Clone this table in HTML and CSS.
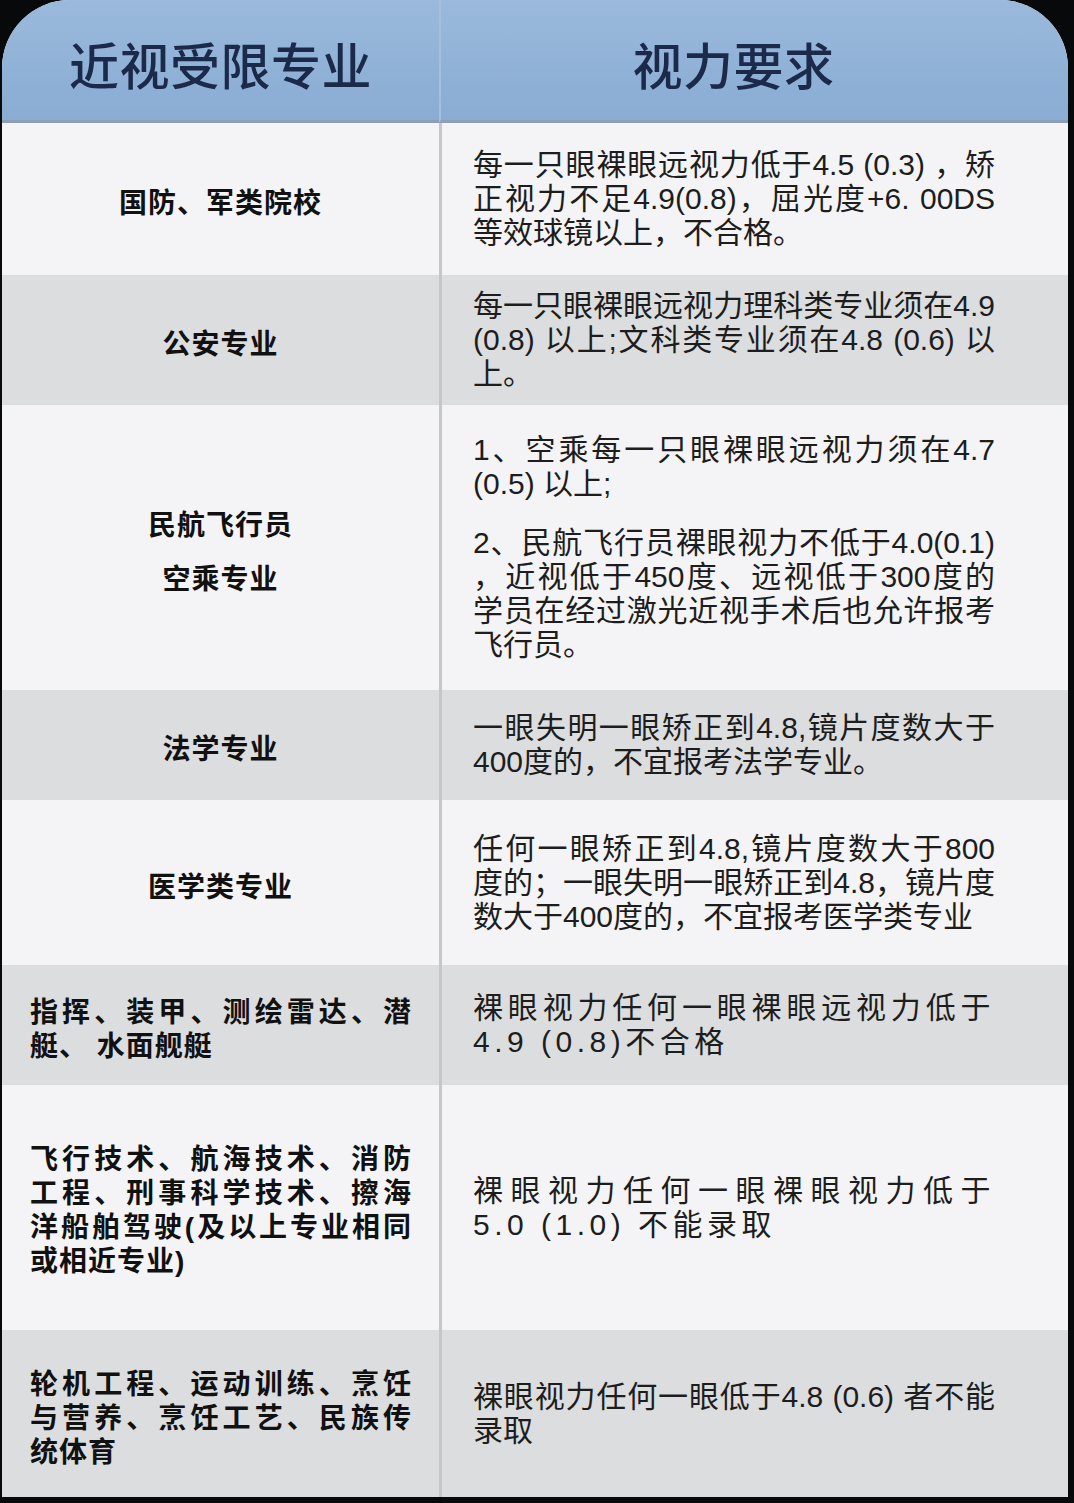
FILE: index.html
```html
<!DOCTYPE html>
<html lang="zh-CN">
<head>
<meta charset="utf-8">
<title>近视受限专业</title>
<link rel="stylesheet" href="styles.css">
</head>
<body>
<div class="card">
  <div class="table">
    <div class="cell head head-left">近视受限专业</div>
    <div class="cell head head-right">视力要求</div>

    <div class="cell major light">国防、军类院校</div>
    <div class="cell req light"><p><span class="ln">每一只眼裸眼远视力低于4.5 (0.3) ，矫</span><span class="ln">正视力不足4.9(0.8)，屈光度+6. 00DS</span><span class="ln">等效球镜以上，不合格。</span></p></div>

    <div class="cell major dark">公安专业</div>
    <div class="cell req dark"><p><span class="ln">每一只眼裸眼远视力理科类专业须在4.9</span><span class="ln">(0.8) 以上;文科类专业须在4.8 (0.6) 以</span><span class="ln">上。</span></p></div>

    <div class="cell major light"><div class="stack"><span>民航飞行员</span><span>空乘专业</span></div></div>
    <div class="cell req light"><div class="paras"><p><span class="ln">1、空乘每一只眼裸眼远视力须在4.7</span><span class="ln">(0.5) 以上;</span></p><p><span class="ln">2、民航飞行员裸眼视力不低于4.0(0.1)</span><span class="ln">，近视低于450度、远视低于300度的</span><span class="ln">学员在经过激光近视手术后也允许报考</span><span class="ln">飞行员。</span></p></div></div>

    <div class="cell major dark">法学专业</div>
    <div class="cell req dark"><p><span class="ln">一眼失明一眼矫正到4.8,镜片度数大于</span><span class="ln">400度的，不宜报考法学专业。</span></p></div>

    <div class="cell major light">医学类专业</div>
    <div class="cell req light"><p><span class="ln">任何一眼矫正到4.8,镜片度数大于800</span><span class="ln">度的；一眼失明一眼矫正到4.8，镜片度</span><span class="ln">数大于400度的，不宜报考医学类专业</span></p></div>

    <div class="cell major long dark"><p><span class="ln">指挥、装甲、测绘雷达、潜</span><span class="ln">艇、 水面舰艇</span></p></div>
    <div class="cell req dark"><p class="spaced"><span class="ln">裸眼视力任何一眼裸眼远视力低于</span><span class="ln">4.9 (0.8)不合格</span></p></div>

    <div class="cell major long tall light"><p><span class="ln">飞行技术、航海技术、消防</span><span class="ln">工程、刑事科学技术、擦海</span><span class="ln">洋船舶驾驶(及以上专业相同</span><span class="ln">或相近专业)</span></p></div>
    <div class="cell req light"><p class="spaced"><span class="ln">裸眼视力任何一眼裸眼视力低于</span><span class="ln">5.0 (1.0) 不能录取</span></p></div>

    <div class="cell major long dark"><p><span class="ln">轮机工程、运动训练、烹饪</span><span class="ln">与营养、烹饪工艺、民族传</span><span class="ln">统体育</span></p></div>
    <div class="cell req dark"><p><span class="ln">裸眼视力任何一眼低于4.8 (0.6) 者不能</span><span class="ln">录取</span></p></div>
  </div>
</div>
</body>
</html>
```

FILE: styles.css
```css
html, body {
  margin: 0;
  padding: 0;
  background: #08090b;
}

body {
  width: 1074px;
  height: 1503px;
  overflow: hidden;
}

.card {
  margin-left: 2px;
  width: 1066px;
  height: 1497px;
  border-radius: 68px 68px 0 0;
  overflow: hidden;
  background: #f4f4f6;
}

.table {
  display: grid;
  grid-template-columns: 437px 629px;
  grid-template-rows: 123px 152px 130px 285px 110px 165px 120px 245px 167px;
}

.cell {
  display: flex;
  align-items: center;
  box-sizing: border-box;
}

.cell p {
  margin: 0;
}

.light {
  background: #f4f4f6;
}

.dark {
  background: #dcdddf;
}

.head {
  background: linear-gradient(#9ab9dc, #8aacd3);
  border-bottom: 3px solid #8b9fb6;
  justify-content: center;
  font-family: "Noto Sans CJK SC", sans-serif;
  font-weight: 500;
  font-size: 50px;
  color: #1b294a;
  padding-top: 6px;
  letter-spacing: 0.5px;
}

.head-right {
  border-left: 2px solid #a6bfdc;
  padding-right: 42px;
}

.major {
  justify-content: center;
  font-family: "Noto Sans CJK SC", sans-serif;
  font-weight: 700;
  font-size: 28px;
  letter-spacing: 1px;
  color: #111111;
  line-height: 34px;
  padding-top: 4px;
}

.stack {
  display: flex;
  flex-direction: column;
  align-items: center;
  gap: 20px;
}

.major.long {
  justify-content: flex-start;
  padding: 10px 27px 0 28px;
  letter-spacing: 1px;
  font-family: "Liberation Sans", "Noto Sans CJK SC", sans-serif;
}

.major.long.tall {
  padding-top: 6px;
}

.major.long p {
  width: 382px;
}

.ln {
  display: block;
  white-space: nowrap;
}

.ln:not(:last-child) {
  text-align: justify;
  text-align-last: justify;
}

.req {
  border-left: 3px solid #c6c7cb;
  padding-left: 31px;
  font-family: "Liberation Sans", "Noto Sans CJK SC", sans-serif;
  font-size: 30px;
  line-height: 34px;
  color: #1d1d1d;
}

.req p {
  width: 522px;
}

.req p.spaced {
  letter-spacing: 4.5px;
}

.paras {
  display: flex;
  flex-direction: column;
  gap: 25px;
}
```
